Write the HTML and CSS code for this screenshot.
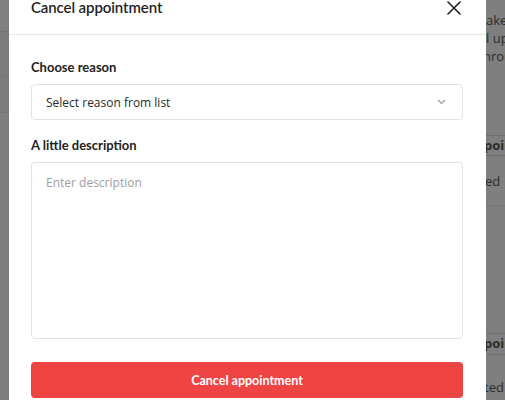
FILE: index.html
```html
<!DOCTYPE html>
<html lang="en">
<head>
<meta charset="utf-8">
<title>Cancel appointment</title>
<link rel="stylesheet" href="styles.css">
</head>
<body>
<div class="screen">
  <div class="page-left">
    <div class="pl-top"></div>
    <div class="pl-row pl-row-a"></div>
    <div class="pl-row pl-row-b"></div>
  </div>

  <div class="modal">
    <div class="modal-header">
      <span class="modal-title">Cancel appointment</span>
      <button class="close-btn" aria-label="Close">
        <svg width="14" height="14" viewBox="0 0 14 14"><path d="M1 1 L13 13 M13 1 L1 13" stroke="#1f1f1f" stroke-width="1.6" fill="none" stroke-linecap="round"/></svg>
      </button>
    </div>
    <div class="modal-body">
      <label class="field-label">Choose reason</label>
      <div class="select">
        <span class="select-text">Select reason from list</span>
        <svg class="chevron" width="9" height="6" viewBox="0 0 9 6"><path d="M1 1 L4.5 4.5 L8 1" stroke="#9a9a9a" stroke-width="1.1" fill="none"/></svg>
      </div>
      <label class="field-label field-label-2">A little description</label>
      <div class="textarea"><span class="placeholder">Enter description</span></div>
      <button class="danger-btn">Cancel appointment</button>
    </div>
  </div>

  <div class="page-right">
    <div class="pr-text">
      <div class="pr-line">ake</div>
      <div class="pr-line">l up</div>
      <div class="pr-line pr-cut">hrou</div>
    </div>
    <div class="pr-head">poin</div>
    <div class="pr-cell">ed</div>
    <div class="pr-gap"></div>
    <div class="pr-head pr-head-2">poin</div>
    <div class="pr-cell pr-cell-2">ted</div>
  </div>
</div>
</body>
</html>
```

FILE: styles.css
```css
* { box-sizing: border-box; }
html, body { margin: 0; padding: 0; }
body {
  background: #7f7f7f;
  font-family: "Lato", "Open Sans", sans-serif;
  color: #1f1f1f;
}
.screen {
  display: flex;
  width: 505px;
  height: 400px;
  overflow: hidden;
}

/* background page, left */
.page-left {
  width: 9px;
  flex: none;
  display: flex;
  flex-direction: column;
}
.pl-top { height: 32px; background: #808080; border-bottom: 1px solid #747474; }
.pl-row { border-bottom: 1px solid #747474; background: #7b7c7d; }
.pl-row-a { height: 45px; }
.pl-row-b { height: 36px; }

/* modal */
.modal {
  width: 477px;
  flex: none;
  background: #ffffff;
  margin-top: -12px;
  height: 440px;
}
.modal-header {
  display: flex;
  align-items: center;
  justify-content: space-between;
  padding: 12px 25px 19px 22px;
  border-bottom: 1px solid #e6e6e6;
}
.modal-title {
  font-size: 15px;
  font-weight: 600;
  line-height: 15px;
  letter-spacing: -0.1px;
}
.close-btn {
  border: 0;
  background: none;
  padding: 0;
  width: 14px;
  height: 14px;
  display: flex;
}
.modal-body {
  padding: 23px 23px 0 22px;
  display: flex;
  flex-direction: column;
}
.field-label {
  font-size: 13px;
  font-weight: 700;
  line-height: 18px;
  margin-bottom: 8px;
  color: #222;
}
.field-label-2 { margin-top: 16px; }
.select {
  height: 36px;
  border: 1px solid #e2e2e2;
  border-radius: 4px;
  display: flex;
  align-items: center;
  justify-content: space-between;
  padding: 0 16px 0 14px;
}
.select-text {
  font-family: "Open Sans", sans-serif;
  font-size: 12px;
  color: #2a2a2a;
}
.textarea {
  height: 177px;
  border: 1px solid #e2e2e2;
  border-radius: 4px;
  padding: 8px 14px;
}
.placeholder {
  font-family: "Open Sans", sans-serif;
  font-size: 12px;
  color: #9e9e9e;
}
.danger-btn {
  margin-top: 23px;
  height: 36px;
  border: 0;
  border-radius: 4px;
  background: #ef4444;
  color: #ffffff;
  font-family: "Lato", sans-serif;
  font-size: 12.5px;
  font-weight: 700;
}

/* background page, right */
.page-right {
  flex: 1;
  overflow: hidden;
  font-family: "Open Sans", sans-serif;
  font-size: 13px;
  color: #2b2b2b;
  white-space: nowrap;
}
.pr-text { padding-top: 11px; height: 135px; }
.pr-line { line-height: 18px; }
.pr-cut { margin-left: -3px; }
.pr-head {
  height: 21px;
  border-top: 1px solid #6f6f6f;
  border-bottom: 1px solid #6f6f6f;
  font-weight: 700;
  line-height: 19px;
  margin-left: -2px;
}
.pr-cell {
  height: 50px;
  border-bottom: 1px solid #747474;
  line-height: 50px;
  margin-left: -1px;
}
.pr-gap { height: 127px; }
.pr-head-2 { height: 22px; }
.pr-cell-2 { line-height: 64px; height: 60px; margin-left: -2px; }
```
